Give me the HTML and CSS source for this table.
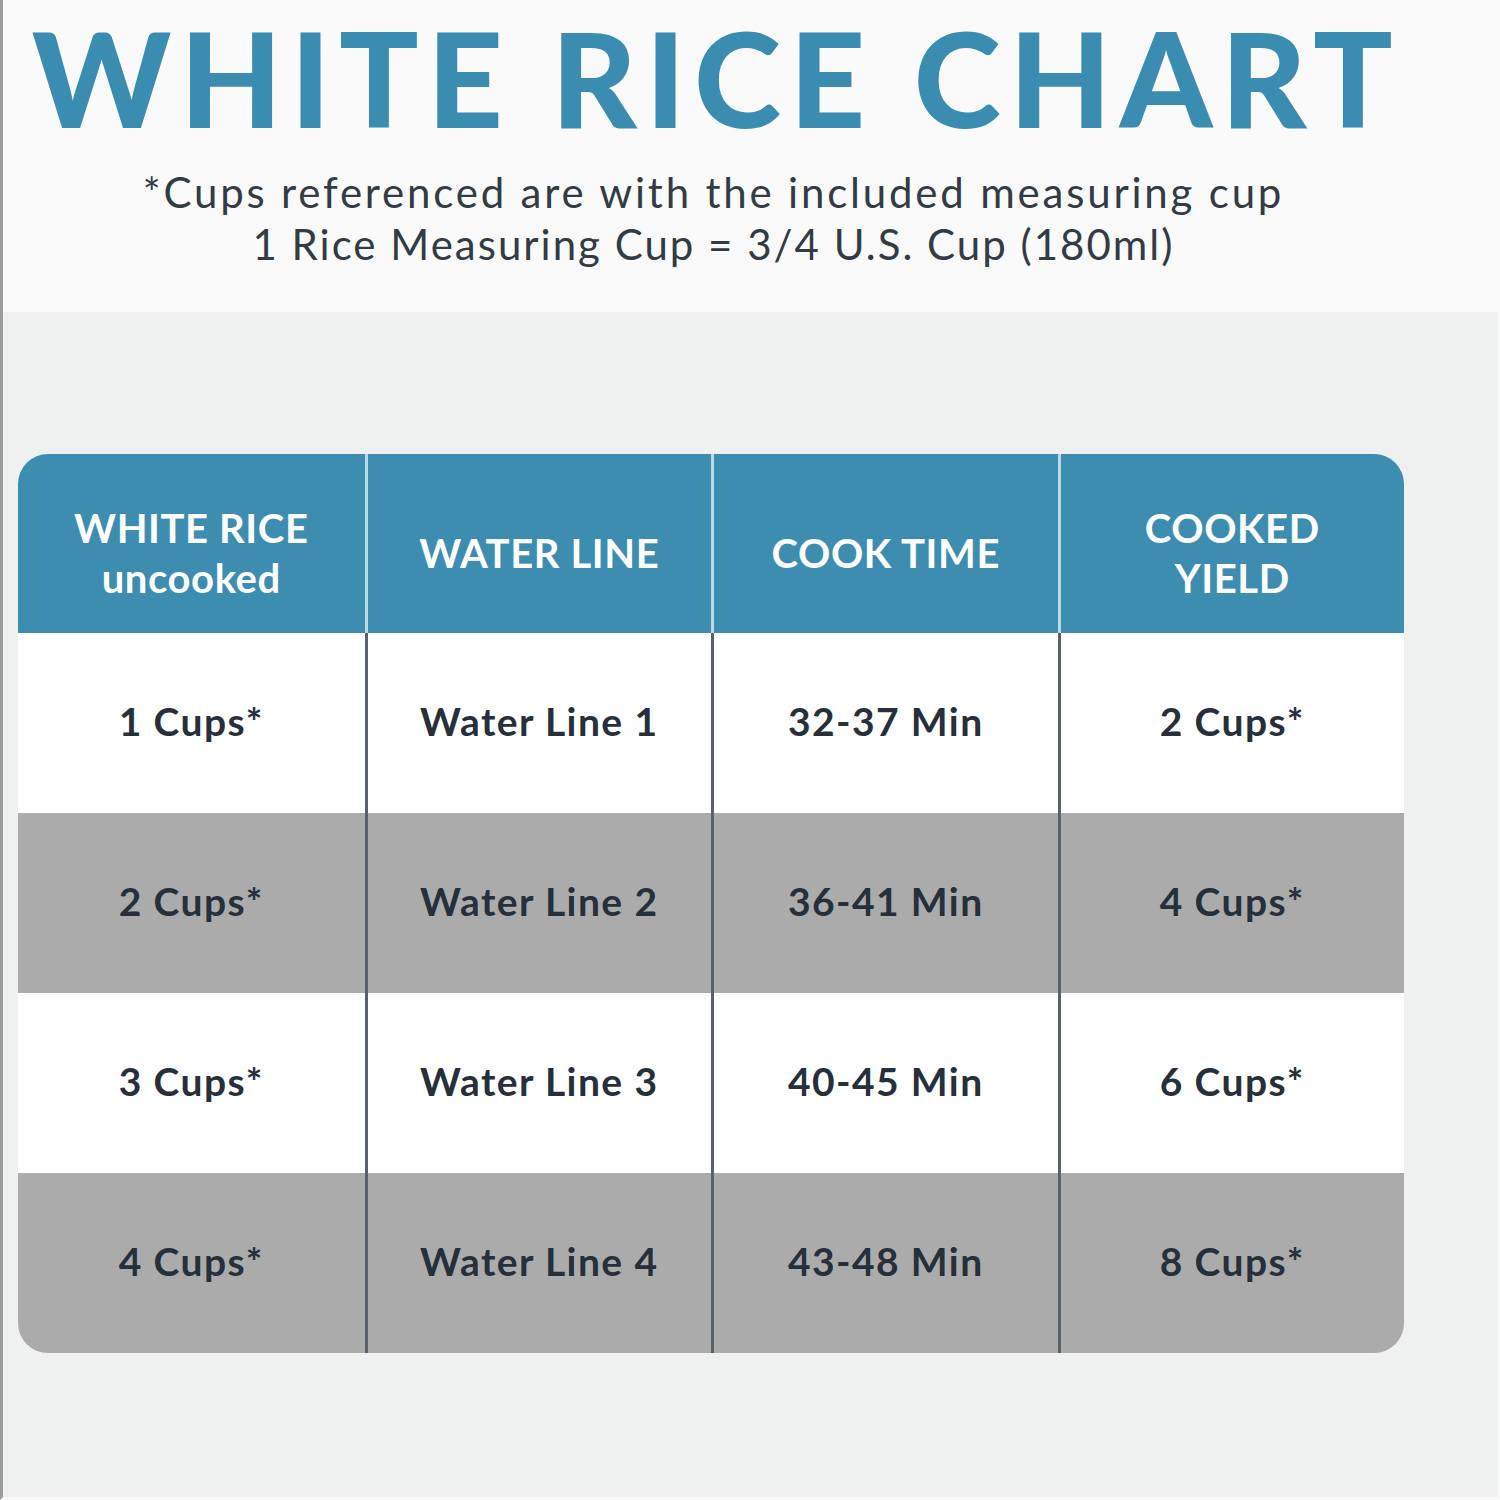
FILE: index.html
```html
<!DOCTYPE html>
<html>
<head>
<meta charset="utf-8">
<link rel="stylesheet" href="styles.css">
</head>
<body>
<div class="frame">
  <header class="top">
    <h1 class="title">WHITE RICE CHART</h1>
    <p class="note note-first">*Cups referenced are with the included measuring cup</p>
    <p class="note note-second">1 Rice Measuring Cup = 3/4 U.S. Cup (180ml)</p>
  </header>
  <main class="lower">
    <div class="chart">
      <div class="cell head">WHITE RICE<br>uncooked</div>
      <div class="cell head">WATER LINE</div>
      <div class="cell head">COOK TIME</div>
      <div class="cell head">COOKED<br>YIELD</div>

      <div class="cell">1 Cups*</div>
      <div class="cell">Water Line 1</div>
      <div class="cell">32-37 Min</div>
      <div class="cell">2 Cups*</div>

      <div class="cell alt">2 Cups*</div>
      <div class="cell alt">Water Line 2</div>
      <div class="cell alt">36-41 Min</div>
      <div class="cell alt">4 Cups*</div>

      <div class="cell">3 Cups*</div>
      <div class="cell">Water Line 3</div>
      <div class="cell">40-45 Min</div>
      <div class="cell">6 Cups*</div>

      <div class="cell alt">4 Cups*</div>
      <div class="cell alt">Water Line 4</div>
      <div class="cell alt">43-48 Min</div>
      <div class="cell alt">8 Cups*</div>
    </div>
  </main>
</div>
</body>
</html>
```

FILE: styles.css
```css
* { box-sizing: border-box; }
html, body { margin: 0; padding: 0; }
body { background: #eff0f0; font-family: "Lato", "Liberation Sans", sans-serif; }

.frame {
  width: 1500px;
  height: 1500px;
  border-left: 3px solid #9b9b9b;
  border-right: 2px solid #fafafa;
  border-bottom: 3px solid #fafafa;
  background: #eff0f0;
  display: flex;
  flex-direction: column;
}

.top {
  height: 312px;
  background: #fafafa;
  width: 1497px;
  padding-top: 2px;
}
.title {
  width: 1427px;
  margin: 0;
  text-align: center;
  color: #3a8db0;
  font-family: "Lato", sans-serif;
  font-weight: 900;
  font-size: 132px;
  line-height: 150px;
  letter-spacing: 8.5px;
}
.note {
  width: 1421px;
  margin: 0;
  text-align: center;
  color: #333b44;
  font-size: 42px;
  line-height: 52px;
  font-weight: 400;
}
.note-first { margin-top: 14px; letter-spacing: 2.8px; }
.note-second { letter-spacing: 2px; }

.lower {
  padding: 142px 0 0 15px;
}
.chart {
  width: 1386px;
  display: grid;
  grid-template-columns: repeat(4, 1fr);
  grid-template-rows: 179px repeat(4, 180px);
  border-radius: 30px;
  overflow: hidden;
}
.cell {
  display: flex;
  align-items: center;
  justify-content: center;
  text-align: center;
  background: #ffffff;
  color: #27303a;
  font-size: 39px;
  font-weight: 700;
  letter-spacing: 1.4px;
  padding-bottom: 4px;
}
.cell:not(:nth-child(4n+1)) { border-left: 3px solid #5b6169; }
.cell.alt { background: #ababab; }
.cell.head {
  background: #3d8db0;
  color: #ffffff;
  font-size: 40px;
  line-height: 50px;
  letter-spacing: 0.6px;
  padding-bottom: 0;
  padding-top: 18px;
}
.cell.head:not(:nth-child(4n+1)) {
  border-left: 3px solid #b9dae5;
}
```
